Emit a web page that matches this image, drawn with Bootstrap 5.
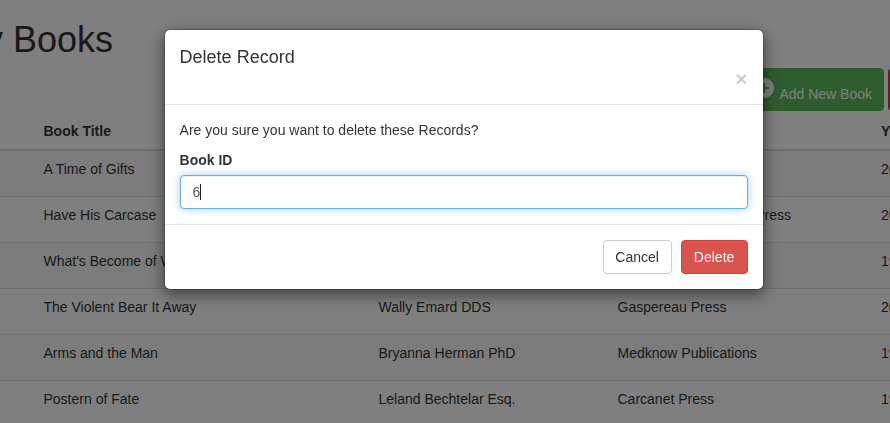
<!DOCTYPE html>
<html lang="en">
<head>
<meta charset="utf-8">
<meta name="viewport" content="width=device-width, initial-scale=1">
<title>My Books</title>
<link href="https://cdn.jsdelivr.net/npm/bootstrap@5.3.0/dist/css/bootstrap.min.css" rel="stylesheet">
<style>
  html, body { height: 100%; overflow: hidden; }
  body { font: 14px/20px "Liberation Sans", Arial, sans-serif; color: #333; background: #fff; }
  .page-wrap { height: 423px; }
  .page-heading { font-size: 36px; line-height: 40px; font-weight: 400; margin: 0 0 0 -45px; padding-top: 20px; height: 68px; color: #333; }
  .btn { --bs-btn-font-size: 14px; --bs-btn-line-height: 20px; --bs-btn-padding-x: 12px; --bs-btn-padding-y: 6px; --bs-btn-border-radius: 4px; }
  .toolbar { height: 43px; gap: 4px; margin-right: -92px; }
  .btn-add { --bs-btn-bg: #5cb85c; --bs-btn-border-color: #5cb85c; --bs-btn-color: #fff; --bs-btn-padding-x: 11px; width: 147px; flex: none; gap: 3px; }
  .btn-add svg { margin-bottom: 4px; }
  .btn-add span { padding-top: 8px; }
  .btn-drop { width: 94px; flex: none; --bs-btn-bg: #dc3545; --bs-btn-border-color: #dc3545; }
  .book-table { table-layout: fixed; width: 973px; margin: 2px 0 0; --bs-table-striped-bg: #f9f9f9; --bs-table-striped-color: #333; --bs-table-color: #333; border-color: #ddd; }
  .book-table > :not(caption) > * > * { padding: 8px; border-bottom: 0; border-top: 1px solid #ddd; }
  .book-table > thead > tr > th { border-top: 0; border-bottom: 2px solid #ddd; }
  .book-table tbody tr { height: 46px; }
  .book-table > tbody > tr:first-child > td { border-top: 0; }
  .c-check { width: 35.5px; } .c-title { width: 335px; } .c-author { width: 239px; } .c-pub { width: 263.5px; }
  .modal-dialog { width: 600px; max-width: 600px; margin: 29px 0 0 163.6px; }
  .modal-content { border: 1px solid rgba(0,0,0,.2); border-radius: 6px; background-clip: padding-box; box-shadow: 0 5px 15px rgba(0,0,0,.5); color: #333; }
  .modal-header { height: 75px; padding: 15px; border-color: #e5e5e5; }
  .modal-title { font-size: 18px; line-height: 25px; font-weight: 400; }
  .close-x { border: 0; background: none; padding: 0; font-size: 21px; line-height: 21px; font-weight: 700; color: #000; opacity: .2; margin-top: -2px; }
  .modal-body { padding: 15px; flex: none; }
  .question { margin: 0 0 10px; }
  .field-label { font-weight: 700; margin-bottom: 5px; display: block; }
  .id-field { height: 34px; padding: 6px 12px; font-size: 14px; line-height: 20px; color: #555; border: 1px solid #66afe9; border-radius: 4px; box-shadow: inset 0 1px 1px rgba(0,0,0,.075), 0 0 8px rgba(102,175,233,.6); }
  .caret-bar { width: 1px; height: 16px; background: #222; margin: 2px 0 0 -.5px; }
  .modal-footer { padding: 15px; gap: 9px; border-color: #e5e5e5; }
  .modal-footer > * { margin: 0; }
  .btn-cancel { --bs-btn-color: #333; --bs-btn-bg: #fff; --bs-btn-border-color: #ccc; width: 69px; padding-left: 0; padding-right: 0; }
  .btn-delete { --bs-btn-color: #fff; --bs-btn-bg: #d9534f; --bs-btn-border-color: #d43f3a; width: 67px; }
</style>
</head>
<body>
<main class="page-wrap overflow-hidden">
  <h2 class="page-heading text-nowrap">My Books</h2>
  <div class="toolbar d-flex justify-content-end">
    <button class="btn btn-add d-flex align-items-center justify-content-end text-nowrap">
      <svg width="24" height="24" viewBox="0 0 24 24" fill="currentColor"><path d="M12 2C6.48 2 2 6.48 2 12s4.48 10 10 10 10-4.48 10-10S17.52 2 12 2zm5 11h-4v4h-2v-4H7v-2h4V7h2v4h4v2z"/></svg>
      <span>Add New Book</span>
    </button>
    <button class="btn btn-drop" aria-label="Delete"></button>
  </div>
  <table class="table table-striped book-table">
    <thead><tr><th class="c-check"></th><th class="c-title">Book Title</th><th class="c-author"></th><th class="c-pub"></th><th>Year</th></tr></thead>
    <tbody>
      <tr><td></td><td>A Time of Gifts</td><td></td><td></td><td>2006</td></tr>
      <tr><td></td><td>Have His Carcase</td><td></td><td>Cambridge University Press</td><td>2001</td></tr>
      <tr><td></td><td>What's Become of Waring</td><td></td><td></td><td>1998</td></tr>
      <tr><td></td><td>The Violent Bear It Away</td><td>Wally Emard DDS</td><td>Gaspereau Press</td><td>2004</td></tr>
      <tr><td></td><td>Arms and the Man</td><td>Bryanna Herman PhD</td><td>Medknow Publications</td><td>1995</td></tr>
      <tr><td></td><td>Postern of Fate</td><td>Leland Bechtelar Esq.</td><td>Carcanet Press</td><td>1992</td></tr>
    </tbody>
  </table>
</main>

<div class="modal-backdrop show"></div>
<div class="modal d-block overflow-hidden" tabindex="-1" role="dialog">
  <div class="modal-dialog">
    <div class="modal-content">
      <div class="modal-header d-flex flex-column align-items-stretch justify-content-start">
        <h4 class="modal-title">Delete Record</h4>
        <button class="close-x align-self-end" aria-label="Close">×</button>
      </div>
      <div class="modal-body">
        <p class="question">Are you sure you want to delete these Records?</p>
        <label class="field-label">Book ID</label>
        <div class="form-control id-field d-flex" role="textbox"><span>6</span><i class="caret-bar"></i></div>
      </div>
      <div class="modal-footer">
        <button class="btn btn-cancel">Cancel</button>
        <button class="btn btn-delete">Delete</button>
      </div>
    </div>
  </div>
</div>
<script src="https://cdn.jsdelivr.net/npm/bootstrap@5.3.0/dist/js/bootstrap.bundle.min.js"></script>
</body>
</html>
